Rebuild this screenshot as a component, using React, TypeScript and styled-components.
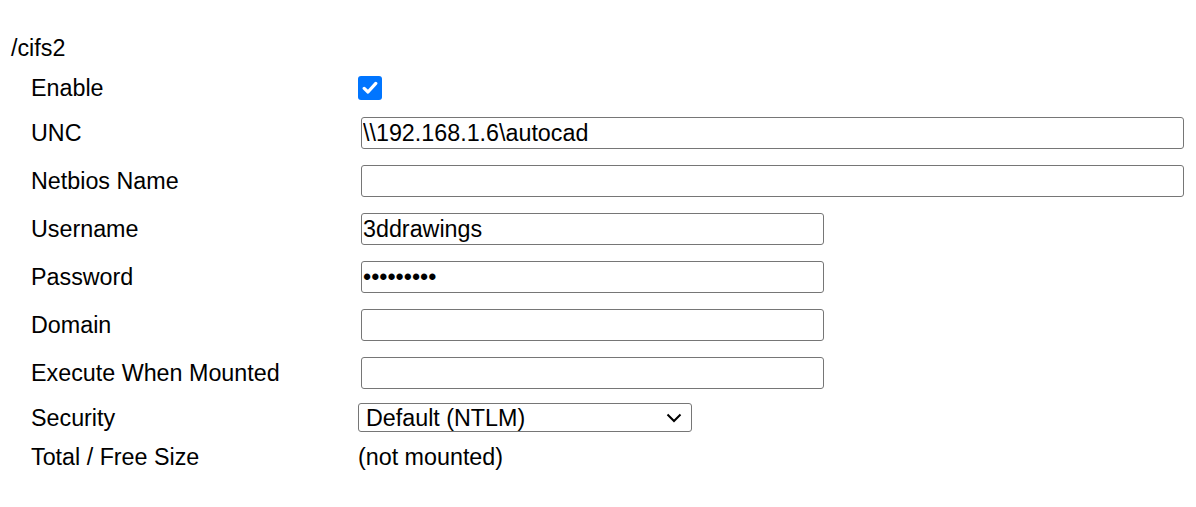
import styled, { createGlobalStyle } from 'styled-components'

const GlobalStyle = createGlobalStyle`
  body {
    margin: 8px;
    background: #ffffff;
    font-family: 'Liberation Sans', Arial, sans-serif;
    color: #000000;
  }
`

const Page = styled.div`
  padding: 27px 0 0 3px;
  font-size: 23.3px;
  line-height: 26px;
`

const Heading = styled.div`
  height: 26px;
  margin-bottom: 6px;
`

const Form = styled.div`
  display: flex;
  flex-direction: column;
  padding-left: 20px;
`

const Row = styled.div<{ $h: number }>`
  display: grid;
  grid-template-columns: 327px 1fr;
  align-items: center;
  height: ${(p) => p.$h}px;
`

const Label = styled.div`
  white-space: nowrap;
`

const Value = styled.div<{ $shift?: number }>`
  display: flex;
  align-items: center;
  margin-left: ${(p) => p.$shift ?? 0}px;
`

const TextInput = styled.input<{ $w: number }>`
  box-sizing: border-box;
  width: ${(p) => p.$w}px;
  height: 32px;
  border: 1px solid #767676;
  border-radius: 3px;
  padding: 0 2px 0 1px;
  font-family: 'Liberation Sans', Arial, sans-serif;
  font-size: 23.3px;
  color: #000000;
  background: #ffffff;
  outline: none;
`

const CheckBox = styled.span`
  display: inline-flex;
  align-items: center;
  justify-content: center;
  width: 24px;
  height: 24px;
  border-radius: 3px;
  background: #0075ff;
`

const SelectWrap = styled.div`
  position: relative;
  width: 334px;
  height: 29px;
`

const Select = styled.select`
  appearance: none;
  box-sizing: border-box;
  width: 100%;
  height: 100%;
  border: 1px solid #767676;
  border-radius: 3px;
  padding: 0 30px 0 7px;
  font-family: 'Liberation Sans', Arial, sans-serif;
  font-size: 23.3px;
  color: #000000;
  background: #ffffff;
  outline: none;
`

const Chevron = styled.svg`
  position: absolute;
  right: 10px;
  top: 10px;
  pointer-events: none;
`

const fields = [
  { label: 'UNC', value: '\\\\192.168.1.6\\autocad', w: 823, type: 'text' },
  { label: 'Netbios Name', value: '', w: 823, type: 'text' },
  { label: 'Username', value: '3ddrawings', w: 463, type: 'text' },
  { label: 'Password', value: 'xxxxxxxxx', w: 463, type: 'password' },
  { label: 'Domain', value: '', w: 463, type: 'text' },
  { label: 'Execute When Mounted', value: '', w: 463, type: 'text' },
]

export default function App() {
  return (
    <>
      <GlobalStyle />
      <Page>
        <Heading>/cifs2</Heading>
        <Form>
          <Row $h={42}>
            <Label>Enable</Label>
            <Value>
              <CheckBox>
                <svg width="16" height="14" viewBox="0 0 16 14">
                  <path
                    d="M2.2 7.4 L6 11 L13.8 2.4"
                    fill="none"
                    stroke="#ffffff"
                    strokeWidth="3.2"
                    strokeLinecap="round"
                    strokeLinejoin="round"
                  />
                </svg>
              </CheckBox>
            </Value>
          </Row>
          {fields.map((f) => (
            <Row key={f.label} $h={48}>
              <Label>{f.label}</Label>
              <Value $shift={3}>
                <TextInput $w={f.w} type={f.type} defaultValue={f.value} />
              </Value>
            </Row>
          ))}
          <Row $h={41}>
            <Label>Security</Label>
            <Value>
              <SelectWrap>
                <Select defaultValue="ntlm">
                  <option value="ntlm">Default (NTLM)</option>
                  <option value="ntlmv2">NTLMv2</option>
                  <option value="krb5">Kerberos</option>
                </Select>
                <Chevron width="16" height="10" viewBox="0 0 16 10">
                  <path d="M1.5 1.5 L8 8 L14.5 1.5" fill="none" stroke="#000" strokeWidth="2" />
                </Chevron>
              </SelectWrap>
            </Value>
          </Row>
          <Row $h={38}>
            <Label>Total / Free Size</Label>
            <Value>(not mounted)</Value>
          </Row>
        </Form>
      </Page>
    </>
  )
}
